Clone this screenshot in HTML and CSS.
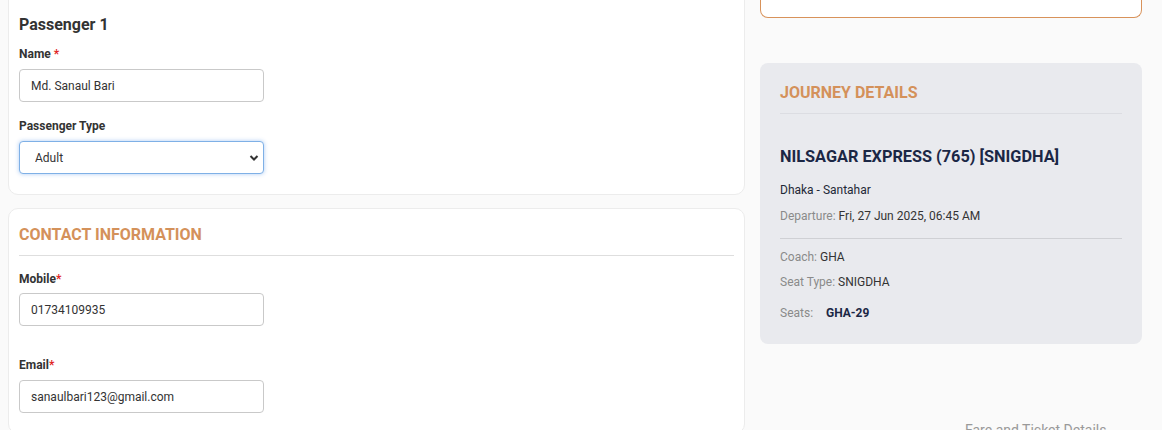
FILE: index.html
```html
<!DOCTYPE html>
<html lang="en">
<head>
    <meta charset="UTF-8">
    <meta name="viewport" content="width=device-width, initial-scale=1.0">
    <title>Passenger details</title>
    <link rel="stylesheet" href="styles.css">
</head>
<body>
    <main class="page">
        <section class="left">
            <div class="card">
                <h2 class="card-title">Passenger 1</h2>
                <div class="field">
                    <label>Name <span class="req">*</span></label>
                    <input class="inp" type="text" value="Md. Sanaul Bari">
                </div>
                <div class="field">
                    <label>Passenger Type</label>
                    <select class="inp sel">
                        <option>Adult</option>
                        <option>Child</option>
                    </select>
                </div>
            </div>
            <div class="card">
                <h2 class="section-title">CONTACT INFORMATION</h2>
                <div class="field spaced">
                    <label>Mobile<span class="req">*</span></label>
                    <input class="inp" type="text" value="01734109935">
                </div>
                <div class="field">
                    <label>Email<span class="req">*</span></label>
                    <input class="inp" type="text" value="sanaulbari123@gmail.com">
                </div>
            </div>
        </section>
        <aside class="right">
            <div class="timer-box"></div>
            <div class="journey">
                <h2 class="section-title">JOURNEY DETAILS</h2>
                <h3 class="train">NILSAGAR EXPRESS (765) [SNIGDHA]</h3>
                <p class="route">Dhaka - Santahar</p>
                <p class="row"><span class="muted">Departure:</span> Fri, 27 Jun 2025, 06:45 AM</p>
                <hr class="line">
                <p class="row first"><span class="muted">Coach:</span> GHA</p>
                <p class="row"><span class="muted">Seat Type:</span> SNIGDHA</p>
                <p class="row seats"><span class="muted">Seats:</span> <b>GHA-29</b></p>
            </div>
            <p class="footnote">Fare and Ticket Details</p>
        </aside>
    </main>
</body>
</html>
```

FILE: styles.css
```css
*{box-sizing: border-box;}
body{
    margin: 0;
    background-color: #fafafa;
    font-family: Roboto, 'Liberation Sans', sans-serif;
    color: #333;
    overflow: hidden;
    height: 430px;
}
.page{
    display: grid;
    grid-template-columns: 737px 382px;
    column-gap: 15px;
    padding-left: 8px;
    margin-top: -12px;
    align-items: start;
}
.left{display: flex;flex-direction: column;gap: 13px;}
.card{
    background: #fff;
    border: 1px solid #ececec;
    border-radius: 10px;
    padding: 10px 10px 20px 10px;
}
.card-title{font-size: 16px;line-height: 20px;font-weight: 700;margin: 16px 0 11px 0;color: #333;}
.section-title{
    font-size: 16px;line-height: 20px;font-weight: 700;
    color: #d4915a;
    margin: 0;
    padding-bottom: 10px;
    border-bottom: 1px solid #dedede;
}
.card .section-title{margin: 6px 0 15px 0;}
.field{margin-bottom: 16px;}
.field:last-child{margin-bottom: 0;}
.field.spaced{margin-bottom: 31px;}
.field.spaced label{margin-bottom: 6px;}
label{display: block;font-size: 12px;line-height: 16px;font-weight: 700;color: #333;margin-bottom: 7px;}
.req{color: #e02424;}
.inp{
    display: block;
    width: 245px;
    height: 33px;
    border: 1px solid #c9c9c9;
    border-radius: 4px;
    padding: 0 11px;
    font-family: Roboto, 'Liberation Sans', sans-serif;
    font-size: 12px;
    color: #333;
    background: #fff;
}
.sel{
    appearance: none;
    padding-left: 15px;
    border-color: #7fb0e6;
    box-shadow: 0 0 4px rgba(70,140,230,.45);
    background-image: url("data:image/svg+xml,%3Csvg xmlns='http://www.w3.org/2000/svg' width='10' height='8' viewBox='0 0 10 8'%3E%3Cpath d='M1.5 2l3.5 3.5L8.5 2' fill='none' stroke='%23333' stroke-width='2'/%3E%3C/svg%3E");
    background-repeat: no-repeat;
    background-position: right 4px center;
}
.timer-box{
    height: 30px;
    background: #fff;
    border: 1px solid #d8925a;
    border-top: none;
    border-radius: 0 0 8px 8px;
    margin-bottom: 45px;
}
.journey{
    background: #e9eaee;
    border-radius: 8px;
    padding: 20px 20px 23px 20px;
}
.journey .section-title{border-bottom-color: #dcdde2;}
.train{font-size: 16.3px;line-height: 20px;font-weight: 700;color: #1b2745;margin: 33px 0 15px 0;}
.route{font-size: 12px;line-height: 16px;margin: 0 0 10px 0;color: #1f2937;}
.row{font-size: 12px;line-height: 16px;margin: 0 0 9px 0;color: #333;}
.muted{color: #8a8a8a;}
.line{border: none;border-top: 1px solid #cfd0d4;margin: 14px 0 10px 0;}
.row.seats{margin: 15px 0 0 0;}
.seats b{margin-left: 10px;color: #1b2745;}
.footnote{margin: 78px 0 0 205px;font-size: 14px;color: #999;}
```
